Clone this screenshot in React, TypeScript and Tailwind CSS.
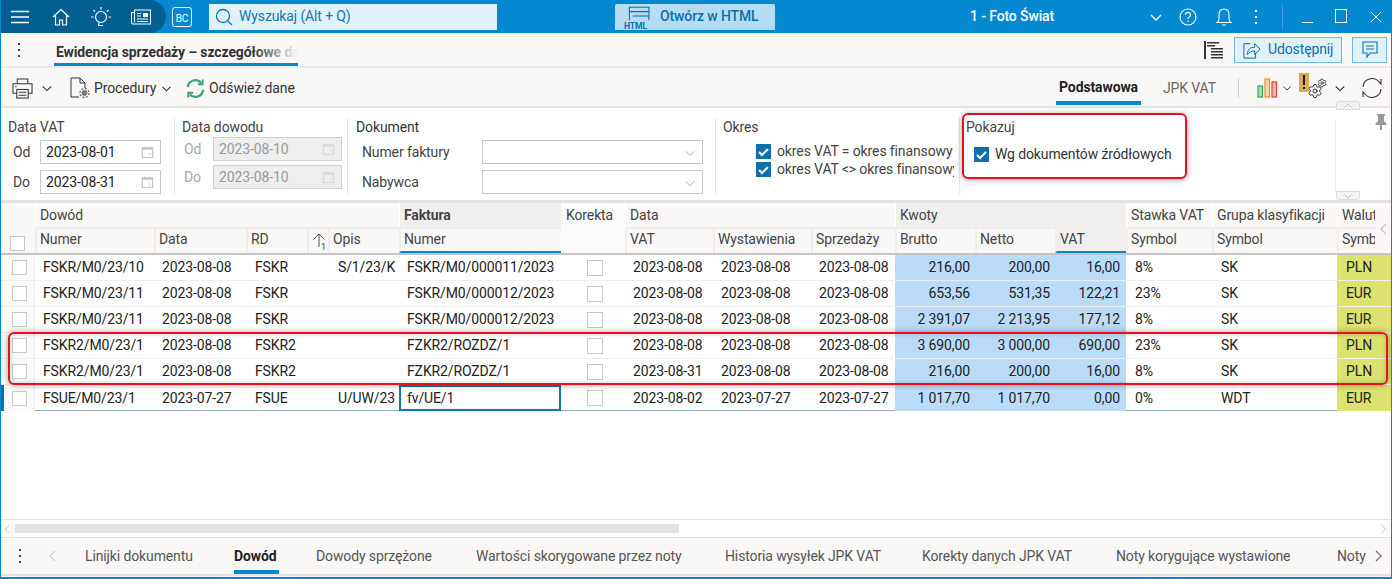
import React from "react";
import { Settings } from "lucide-react";

const gridCols =
    "grid grid-cols-[34px_119px_92px_61px_21px_71px_162px_64px_88px_98px_84px_80px_80px_71px_86px_125px_54px]";

const rows = [
    ["FSKR/M0/23/10", "2023-08-08", "FSKR", "S/1/23/K", "FSKR/M0/000011/2023", "2023-08-08", "2023-08-08", "2023-08-08", "216,00", "200,00", "16,00", "8%", "SK", "PLN"],
    ["FSKR/M0/23/11", "2023-08-08", "FSKR", "", "FSKR/M0/000012/2023", "2023-08-08", "2023-08-08", "2023-08-08", "653,56", "531,35", "122,21", "23%", "SK", "EUR"],
    ["FSKR/M0/23/11", "2023-08-08", "FSKR", "", "FSKR/M0/000012/2023", "2023-08-08", "2023-08-08", "2023-08-08", "2 391,07", "2 213,95", "177,12", "8%", "SK", "EUR"],
    ["FSKR2/M0/23/1", "2023-08-08", "FSKR2", "", "FZKR2/ROZDZ/1", "2023-08-08", "2023-08-08", "2023-08-08", "3 690,00", "3 000,00", "690,00", "23%", "SK", "PLN"],
    ["FSKR2/M0/23/1", "2023-08-08", "FSKR2", "", "FZKR2/ROZDZ/1", "2023-08-31", "2023-08-08", "2023-08-08", "216,00", "200,00", "16,00", "8%", "SK", "PLN"],
    ["FSUE/M0/23/1", "2023-07-27", "FSUE", "U/UW/23", "fv/UE/1", "2023-08-02", "2023-07-27", "2023-07-27", "1 017,70", "1 017,70", "0,00", "0%", "WDT", "EUR"],
];

const bottomTabs = [
    { label: "Linijki dokumentu", cls: "w-[149px] text-[#555]" },
    { label: "Dowód", cls: "w-[82px] font-bold text-[#222]" },
    { label: "Dowody sprzężone", cls: "w-[160px] text-[#555]" },
    { label: "Wartości skorygowane przez noty", cls: "w-[249px] text-[#555]" },
    { label: "Historia wysyłek JPK VAT", cls: "w-[197px] text-[#555]" },
    { label: "Korekty danych JPK VAT", cls: "w-[194px] text-[#555]" },
    { label: "Noty korygujące wystawione", cls: "w-[221px] text-[#555]" },
    { label: "Noty", cls: "w-[34px] text-[#555]" },
];

function Chevron({ className, dir = "down" }: { className?: string; dir?: "down" | "up" | "left" | "right" }) {
    const d = {
        down: "M2 5l5 5 5-5",
        up: "M2 9l5-5 5 5",
        left: "M9 2L4 7l5 5",
        right: "M5 2l5 5-5 5",
    }[dir];
    return (
        <svg viewBox="0 0 14 14" fill="none" stroke="currentColor" strokeWidth="1.3" className={"shrink-0 " + (className || "")}>
            <path d={d} />
        </svg>
    );
}

function Check({ className }: { className?: string }) {
    return (
        <span className={"flex items-center justify-center bg-[#0f6fa8] w-[15px] h-[15px] shrink-0 " + (className || "")}>
            <svg viewBox="0 0 15 15" fill="none" stroke="#fff" strokeWidth="2" className="w-[15px] h-[15px]">
                <path d="M3 8l3 3 6-6" />
            </svg>
        </span>
    );
}

function Box({ className }: { className?: string }) {
    return <span className={"block w-[15px] h-[15px] border border-[#c9c9c9] bg-white " + (className || "")} />;
}

function CalendarIcon({ faded }: { faded?: boolean }) {
    return (
        <svg viewBox="0 0 14 14" className={"w-[13px] h-[13px] absolute right-[6px] top-1/2 -translate-y-1/2 " + (faded ? "opacity-50" : "")} fill="none" stroke="#c6c6c6" strokeWidth="1.4">
            <rect x="1.5" y="2.5" width="11" height="10.5" />
            <path d="M1.5 3.5h11" strokeWidth="2" />
            <path d="M4 1v2M10 1v2" />
            <rect x="8.5" y="8.5" width="1.5" height="1.5" fill="#c6c6c6" stroke="none" />
        </svg>
    );
}

function DateField({ value, disabled, className }: { value: string; disabled?: boolean; className?: string }) {
    return (
        <div
            className={
                "relative h-[24px] border flex items-center pl-[5px] " +
                (disabled ? "bg-[#eeeeee] border-[#d0d0d0] text-[#9a9a9a] " : "bg-white border-[#c9c9c9] text-[#222] ") +
                (className || "")
            }
        >
            {value}
            <CalendarIcon faded={disabled} />
        </div>
    );
}

function TopBar() {
    return (
        <div className="h-[33px] bg-[#0489d1] flex items-center text-white shrink-0">
            <div className="w-[165px] h-full bg-[#015f91] rounded-r-[20px] flex items-center pl-[10px]">
                <svg viewBox="0 0 18 14" className="w-[18px] h-[14px]" stroke="#fff" strokeWidth="1.4">
                    <path d="M0 1.5h18M0 7h18M0 12.5h18" />
                </svg>
                <svg viewBox="0 0 18 18" className="w-[18px] h-[18px] ml-[23px]" fill="none" stroke="#fff" strokeWidth="1.2">
                    <path d="M1 9l8-7.5L17 9M3.5 7.5V17h4v-5h3v5h4V7.5" />
                </svg>
                <svg viewBox="0 0 22 22" className="w-[22px] h-[22px] ml-[20px]" fill="none" stroke="#fff" strokeWidth="1.2">
                    <circle cx="11" cy="11" r="5.5" />
                    <path d="M9 16.5l-.5 3h4.5M11 1v2.5M3.5 4l1.5 1.5M18.5 4L17 5.500M1 11h2.5M18.500 11H21" />
                </svg>
                <svg viewBox="0 0 20 16" className="w-[20px] h-[16px] ml-[19px]" fill="none" stroke="#fff" strokeWidth="1.1">
                    <path d="M3.500 1h16v14H2a1.500 1.500 0 0 1-1.500-1.500V3.500h3" />
                    <path d="M3.500 1v12.500" />
                    <rect x="12" y="4" width="5" height="4" fill="#fff" stroke="none" />
                    <path d="M6 4.500h4M6 7h4M6 10h11M6 12.500h11" />
                </svg>
            </div>
            <div className="ml-[6px] w-[20px] h-[20px] border border-white rounded-[3px] flex items-end justify-center text-[10px] leading-[14px]">
                BC
            </div>
            <div className="ml-[17px] w-[288px] h-[26px] bg-[#e1f1fa] text-[#0f77b4] flex items-center pl-[6px] text-[14px]">
                <svg viewBox="0 0 18 18" className="w-[18px] h-[18px] mr-[6px]" fill="none" stroke="#0f77b4" strokeWidth="1.3">
                    <circle cx="8" cy="8" r="6.500" />
                    <path d="M12.500 12.500l4.500 4.500" />
                </svg>
                Wyszukaj (Alt + Q)
            </div>
            <div className="ml-[118px] w-[160px] h-[26px] bg-[#b5dcf3] rounded-t-[2px] text-[#0f6fa8] flex items-center pl-[9px] text-[14px] font-medium relative">
                <svg viewBox="0 0 24 24" className="w-[26px] h-[26px] mr-[10px]" fill="none" stroke="#0f6fa8" strokeWidth="1">
                    <path d="M5 15V3h18v12M5 7h18M8 11h15" />
                    <text x="0" y="23" fontSize="8" fontWeight="700" fill="#0f6fa8" stroke="none" fontFamily="Roboto">HTML</text>
                </svg>
                Otwórz w HTML
            </div>
            <div className="ml-[195px] w-[84px] text-[14px] font-medium whitespace-nowrap">1 - Foto Świat</div>
            <Chevron className="w-[14px] h-[14px] ml-[95px]" />
            <svg viewBox="0 0 18 18" className="w-[18px] h-[18px] ml-[16px]" fill="none" stroke="#fff" strokeWidth="1.1">
                <circle cx="9" cy="9" r="8" />
                <path d="M6.500 7c0-3.500 5-3.500 5 0 0 2-2.500 2-2.500 4M9 12.500v1.500" />
            </svg>
            <svg viewBox="0 0 16 20" className="w-[16px] h-[20px] ml-[19px]" fill="none" stroke="#fff" strokeWidth="1.1">
                <path d="M1 15.500h14c-1.500-1-2-2-2-4V7a5 5 0 0 0-10 0v4.500c0 2-.5 3-2 4zM6.500 18h3" />
            </svg>
            <svg viewBox="0 0 4 16" className="w-[4px] h-[16px] ml-[22px]" fill="#fff">
                <rect x="1" y="1" width="2" height="2" />
                <rect x="1" y="7" width="2" height="2" />
                <rect x="1" y="13" width="2" height="2" />
            </svg>
            <div className="w-px h-[24px] bg-[#3aa1da] ml-[24px]" />
            <div className="w-[11px] h-px bg-white ml-[19px] mt-[12px]" />
            <div className="w-[12px] h-[14px] border border-white ml-[22px] -mt-[2px]" />
            <svg viewBox="0 0 12 12" className="w-[12px] h-[12px] ml-[23px]" fill="none" stroke="#fff" strokeWidth="1">
                <path d="M1 1l10 10M11 1L1 11" />
            </svg>
        </div>
    );
}

function TabRow() {
    return (
        <div className="h-[35px] bg-[#f9f8f6] border-b-2 border-[#ecebe9] flex items-center shrink-0 relative">
            <svg viewBox="0 0 4 14" className="w-[4px] h-[14px] ml-[16px]" fill="#444">
                <rect x="1" y="0" width="2" height="2" />
                <rect x="1" y="6" width="2" height="2" />
                <rect x="1" y="12" width="2" height="2" />
            </svg>
            <div className="ml-[33px] w-[244px] h-full border-b-[3px] border-[#0489d1] overflow-hidden whitespace-nowrap pl-[2px] pt-[9px] text-[14px] font-bold text-[#333] relative">
                Ewidencja sprzedaży – szczegółowe dane
                <span className="absolute right-0 top-0 bottom-0 w-[46px] bg-gradient-to-r from-transparent to-[#f9f8f6]" />
            </div>
            <svg viewBox="0 0 20 20" className="w-[20px] h-[20px] ml-[905px]" fill="#333">
                <path d="M1 1h2v18H1zM4 2h12v1.500H4zM4 5h8v1.500H4zM8 8h12v1.500H8zM8 11h12v1.500H8zM8 14h12v1.500H8zM8 17h12v1.500H8z" />
            </svg>
            <div className="ml-[11px] w-[108px] h-[26px] bg-[#e1f1fa] border border-[#6fb7de] text-[#0f6fa8] flex items-center pl-[8px] text-[14px]">
                <svg viewBox="0 0 20 20" className="w-[18px] h-[20px] mr-[7px]" fill="none" stroke="#0f6fa8" strokeWidth="1.1">
                    <path d="M8 3H1v16h13v-6" />
                    <path d="M5 15c0-6 3-8 8-8V3l6 6-6 6v-4c-3 0-6 1-8 4z" />
                </svg>
                Udostępnij
            </div>
            <div className="ml-[10px] w-[35px] h-[26px] bg-[#e1f1fa] border border-[#6fb7de] flex items-center justify-center">
                <svg viewBox="0 0 16 18" className="w-[16px] h-[18px]" fill="none" stroke="#0f6fa8" strokeWidth="1.1">
                    <path d="M1 1h14v11H8l-3 4v-4H1zM4 5h8M4 8h8" />
                </svg>
            </div>
        </div>
    );
}

function Toolbar() {
    return (
        <div className="h-[40px] pt-[2px] bg-[#f9f8f6] border-b-2 border-[#e3e3e1] flex items-center shrink-0 text-[14px] text-[#333] relative whitespace-nowrap">
            <svg viewBox="0 0 22 22" className="w-[21px] h-[21px] ml-[11px]" fill="none" stroke="#333" strokeWidth="1.1">
                <path d="M5.500 6V1h11v5M5 16H1V6h20v10h-4" />
                <rect x="5" y="12" width="12" height="9" />
                <path d="M7 15h8M7 18h8" />
                <path d="M3 9h2" stroke="#0489d1" />
            </svg>
            <Chevron className="w-[12px] h-[12px] ml-[8px]" />
            <svg viewBox="0 0 20 22" className="w-[20px] h-[22px] ml-[17px]" fill="none" stroke="#333" strokeWidth="1">
                <path d="M9 20H1V1h9l5 5v5M10 1v5h5" />
                <circle cx="14.500" cy="16" r="2.500" fill="#777" stroke="#777" />
                <circle cx="14.500" cy="16" r="4.500" stroke="#777" strokeDasharray="2 1.500" strokeWidth="1.500" />
            </svg>
            <span className="ml-[4px] w-[62px]">Procedury</span>
            <Chevron className="w-[11px] h-[11px] ml-[5px]" />
            <svg viewBox="0 0 22 22" className="w-[21px] h-[21px] ml-[13px]" fill="none" stroke="#36a572" strokeWidth="2.400">
                <path d="M3 9.500A8 8 0 0 1 17 5" />
                <path d="M19 12.500A8 8 0 0 1 5 17" />
                <path d="M18.500 1.500V6.500h-5M3.500 20.500v-5h5" strokeWidth="2" />
            </svg>
            <span className="ml-[3px] w-[85px]">Odśwież dane</span>
            <div className="ml-[762px] w-[85px] self-stretch mb-px pt-[7px] text-center font-bold text-[#222] border-b-4 border-[#0489d1]">Podstawowa</div>
            <span className="ml-[22px] w-[53px] text-[#666]">JPK VAT</span>
            <div className="w-px h-[20px] bg-[#cfcfcf] ml-[22px]" />
            <svg viewBox="0 0 21 20" className="w-[21px] h-[20px] ml-[18px]" strokeWidth="1.2">
                <rect x="1" y="8" width="4.500" height="11" fill="#a9dcb9" stroke="#25a852" />
                <rect x="8" y="1" width="4.500" height="18" fill="#fbd9a0" stroke="#ee8a2c" />
                <rect x="15" y="4" width="4.500" height="15" fill="#f8b5b0" stroke="#e5413a" />
            </svg>
            <Chevron className="w-[10px] h-[10px] ml-[4px]" />
            <div className="relative w-[20px] h-[22px] ml-[15px]">
                <Settings size={16} strokeWidth={1.5} className="absolute left-0 bottom-0 text-[#333]" />
                <Settings size={10} strokeWidth={2} className="absolute right-0 top-[1px] text-[#333]" />
            </div>
            <Chevron className="w-[12px] h-[12px] ml-[7px] text-[#222]" />
            <svg viewBox="0 0 22 22" className="w-[22px] h-[24px] ml-[15px]" fill="none" stroke="#333" strokeWidth="1.100">
                <path d="M2 10A9 9 0 0 1 18 5l2 2V2M20 12a9 9 0 0 1-16 5l-2-2v5" />
            </svg>
            <div className="absolute left-[1298px] top-[5px] w-[10px] h-[19px] bg-[#d9ab57] flex items-center justify-center">
                <span className="block w-[2px] h-[15px]">
                    <span className="block w-[2px] h-[10px] bg-[#222]" />
                    <span className="block w-[2px] h-[2px] bg-[#222] mt-[2px]" />
                </span>
            </div>
        </div>
    );
}

function Filters() {
    return (
        <div className="h-[95px] bg-white border-b-[3px] border-[#e2e2e2] flex shrink-0 text-[14px] text-[#444] relative pt-[10px]">
            <div className="w-[174px] h-[77px] border-r border-[#e8e8e8] pl-[7px]">
                <div className="leading-[18px]">Data VAT</div>
                <div className="grid grid-cols-[27px_121px] items-center gap-y-[6px] mt-[4px] pl-[5px]">
                    <span>Od</span>
                    <DateField value="2023-08-01" />
                    <span>Do</span>
                    <DateField value="2023-08-31" />
                </div>
            </div>
            <div className="w-[173px] h-[77px] border-r border-[#e8e8e8] pl-[7px]">
                <div className="leading-[18px]">Data dowodu</div>
                <div className="grid grid-cols-[29px_129px] items-center gap-y-[4px] mt-px pl-[2px] text-[#a8a8a8]">
                    <span>Od</span>
                    <DateField value="2023-08-10" disabled />
                    <span>Do</span>
                    <DateField value="2023-08-10" disabled />
                </div>
            </div>
            <div className="w-[368px] h-[77px] border-r border-[#e8e8e8] pl-[8px]">
                <div className="leading-[18px] text-[#333]">Dokument</div>
                <div className="grid grid-cols-[120px_221px] items-center gap-y-[6px] mt-[4px] pl-[6px]">
                    <span>Numer faktury</span>
                    <div className="relative h-[24px] border border-[#c9c9c9]">
                        <Chevron className="w-[12px] h-[12px] absolute right-[6px] top-[6px] text-[#c6c6c6]" />
                    </div>
                    <span>Nabywca</span>
                    <div className="relative h-[24px] border border-[#c9c9c9]">
                        <Chevron className="w-[12px] h-[12px] absolute right-[6px] top-[6px] text-[#c6c6c6]" />
                    </div>
                </div>
            </div>
            <div className="w-[244px] h-[77px] border-r border-[#e8e8e8] pl-[7px]">
                <div className="leading-[18px]">Okres</div>
                <div className="w-[231px] overflow-hidden whitespace-nowrap mt-[6px] pl-[33px]">
                    <div className="flex items-center h-[18px]">
                        <Check />
                        <span className="ml-[6px]">okres VAT = okres finansowy</span>
                    </div>
                    <div className="flex items-center h-[18px]">
                        <Check />
                        <span className="ml-[6px]">okres VAT &lt;&gt; okres finansowy</span>
                    </div>
                </div>
            </div>
            <div className="w-[374px] h-[77px] pl-[6px]">
                <div className="leading-[18px]">Pokazuj</div>
                <div className="flex items-center mt-[8px] ml-[8px]">
                    <Check />
                    <span className="ml-[6px] text-[#333]">Wg dokumentów źródłowych</span>
                </div>
            </div>
            <div className="absolute left-[1334px] top-[12px] bottom-[8px] w-px bg-[#e8e8e8]" />
            <div className="absolute left-[1335px] -top-[7px] w-[24px] h-[9px] bg-[#f3f3f3] border border-[#dddddd] rounded-t-[3px] flex items-center justify-center">
                <Chevron dir="up" className="w-[12px] h-[10px] text-[#bbbbbb]" />
            </div>
            <div className="absolute left-[1335px] bottom-0 w-[24px] h-[9px] bg-[#f3f3f3] border border-[#dddddd] rounded-b-[3px] flex items-center justify-center">
                <Chevron dir="down" className="w-[12px] h-[10px] text-[#bbbbbb]" />
            </div>
            <svg viewBox="0 0 12 16" className="absolute left-[1374px] top-[6px] w-[12px] h-[16px]" fill="#9a9a9a">
                <path d="M2 0h8v1.500L9 2v5l2.500 2.500V11H7v5H5v-5H.500V9.500L3 7V2L2 1.500z" />
            </svg>
        </div>
    );
}

function TableHeader() {
    const top = "h-[26px] pl-[4px] flex items-center bg-[#f9f8f6] border-b-2 border-[#efeeec] border-l border-l-white text-[#444] overflow-hidden whitespace-nowrap";
    const low = "h-[24px] pl-[3px] pb-[3px] flex items-center bg-[#f9f8f6] border-l-2 border-l-[#efeeec] text-[#444] overflow-hidden whitespace-nowrap";
    return (
        <div className={gridCols + " grid-rows-[26px_24px] border-b-2 border-[#c4c4c4] text-[14px] shrink-0"}>
            <div className="row-span-2 bg-[#f9f8f6] flex items-end pl-[9px] pb-[2px]">
                <Box />
            </div>
            <div className={top + " col-span-5"}>Dowód</div>
            <div className={top + " !bg-[#f0efee] font-bold"}>Faktura</div>
            <div className="row-span-2 bg-[#fbfbfa] pl-[5px] pt-[3px] leading-[18px] text-[#444]">Korekta</div>
            <div className={top + " col-span-3"}>Data</div>
            <div className={top + " col-span-3 !bg-[#f0efee]"}>Kwoty</div>
            <div className={top}>Stawka VAT</div>
            <div className={top}>Grupa klasyfikacji</div>
            <div className={top}>Waluta</div>

            <div className={low}>Numer</div>
            <div className={low}>Data</div>
            <div className={low}>RD</div>
            <div className={low + " !pl-[3px] relative"}>
                <svg viewBox="0 0 14 14" className="w-[14px] h-[14px]" fill="none" stroke="#555" strokeWidth="1">
                    <path d="M7 14V1M1.500 6.500L7 1l5.500 5.500" />
                </svg>
                <span className="absolute right-[2px] bottom-[1px] text-[9px] leading-[10px]">1</span>
            </div>
            <div className={low}>Opis</div>
            <div className={low + " !pb-px border-b-2 border-b-[#0489d1]"}>Numer</div>
            <div className={low}>VAT</div>
            <div className={low}>Wystawienia</div>
            <div className={low}>Sprzedaży</div>
            <div className={low}>Brutto</div>
            <div className={low}>Netto</div>
            <div className={low + " !pb-px !bg-[#f0efee] border-b-2 border-b-[#0489d1]"}>VAT</div>
            <div className={low}>Symbol</div>
            <div className={low}>Symbol</div>
            <div className={low}>Symbol</div>
        </div>
    );
}

function Row({ r, active }: { r: string[]; active: boolean }) {
    const cell = "h-full flex items-center pl-[8px] overflow-hidden whitespace-nowrap";
    const num = "h-full flex items-center justify-end pr-[5px] bg-[#badcf8] whitespace-nowrap";
    return (
        <div className={gridCols + " h-[26px] text-[14px] text-[#222] border-b " + (active ? "border-b-[#8fa9b8] bg-white" : "border-b-[#eeeeee]")}>
            <div className={"h-full flex items-center pl-[11px] bg-[#fafafa] border-r border-[#ededed] " + (active ? "border-l-[3px] border-l-[#0f6fa8] !pl-[8px]" : "")}>
                <Box />
            </div>
            <div className={cell}>{r[0]}</div>
            <div className={cell}>{r[1]}</div>
            <div className={cell + " pl-[9px]"}>{r[2]}</div>
            <div />
            <div className={cell + " pl-[10px]"}>{r[3]}</div>
            {active ? (
                <div className="h-[26px] flex items-center pl-[6px] border-2 border-[#1677a8]">{r[4]}</div>
            ) : (
                <div className={cell}>{r[4]}</div>
            )}
            <div className="h-full flex items-center pl-[26px]">
                <Box className="!w-[16px] !h-[16px]" />
            </div>
            <div className={cell}>{r[5]}</div>
            <div className={cell}>{r[6]}</div>
            <div className={cell}>{r[7]}</div>
            <div className={num}>{r[8]}</div>
            <div className={num}>{r[9]}</div>
            <div className={num + " !pr-[6px]"}>{r[10]}</div>
            <div className={cell + " pl-[9px]"}>{r[11]}</div>
            <div className={cell + " pl-[9px]"}>{r[12]}</div>
            <div className={cell + " pl-[9px] bg-[#dbe26f]"}>{r[13]}</div>
        </div>
    );
}

export default function App() {
    return (
        <div className="relative h-screen w-full flex flex-col overflow-hidden bg-white border-x border-[#0489d1] font-['Roboto',sans-serif] tracking-[-0.12px]">
            <TopBar />
            <TabRow />
            <Toolbar />
            <Filters />
            <TableHeader />
            <div className="flex-1 bg-white">
                {rows.map((r, i) => (
                    <Row key={i} r={r} active={i === 5} />
                ))}
            </div>
            <div className="h-[19px] border-y border-[#e2e2e2] bg-white flex items-center shrink-0 relative">
                <Chevron dir="left" className="w-[12px] h-[12px] text-[#d8d8d8] ml-[1px]" />
                <div className="ml-[1px] w-[664px] h-[9px] bg-[#e3e3e3]" />
                <Chevron dir="right" className="w-[12px] h-[12px] text-[#d8d8d8] absolute right-[2px] top-[3px]" />
            </div>
            <div className="h-[38px] bg-[#f9f8f6] border-b-2 border-[#e3e3e1] flex items-center text-[14px] shrink-0 relative">
                <svg viewBox="0 0 4 14" className="w-[4px] h-[14px] ml-[17px]" fill="#444">
                    <rect x="1" y="0" width="2" height="2" />
                    <rect x="1" y="6" width="2" height="2" />
                    <rect x="1" y="12" width="2" height="2" />
                </svg>
                <Chevron dir="left" className="w-[14px] h-[14px] text-[#d0d0d0] ml-[24px]" />
                <div className="flex ml-[25px] items-center">
                    {bottomTabs.map((t) => (
                        <span key={t.label} className={"whitespace-nowrap " + t.cls}>
                            {t.label}
                        </span>
                    ))}
                </div>
                <Chevron dir="right" className="w-[14px] h-[14px] text-[#777]" />
                <div className="absolute left-[233px] bottom-0 w-[45px] h-[4px] bg-[#0489d1]" />
            </div>
            <div className="h-[3px] bg-white border-b-2 border-[#0489d1] shrink-0" />

            <div className="absolute left-[1374px] top-[205px] bottom-[326px] w-[17px] bg-[#f9f8f6] flex items-center justify-center">
                <Chevron dir="left" className="w-[14px] h-[16px] text-[#c4c4c4]" />
            </div>

            <div className="absolute left-[961px] top-[113px] w-[225px] h-[66px] border-2 border-[#e8101a] rounded-[6px] shadow-[0_1px_6px_rgba(0,0,0,0.35)]" />
            <div className="absolute left-[7px] top-[332px] w-[1380px] h-[53px] border-2 border-[#e8101a] rounded-[6px] shadow-[0_0_6px_rgba(0,0,0,0.35),inset_0_0_5px_rgba(0,0,0,0.2)]" />
        </div>
    );
}
